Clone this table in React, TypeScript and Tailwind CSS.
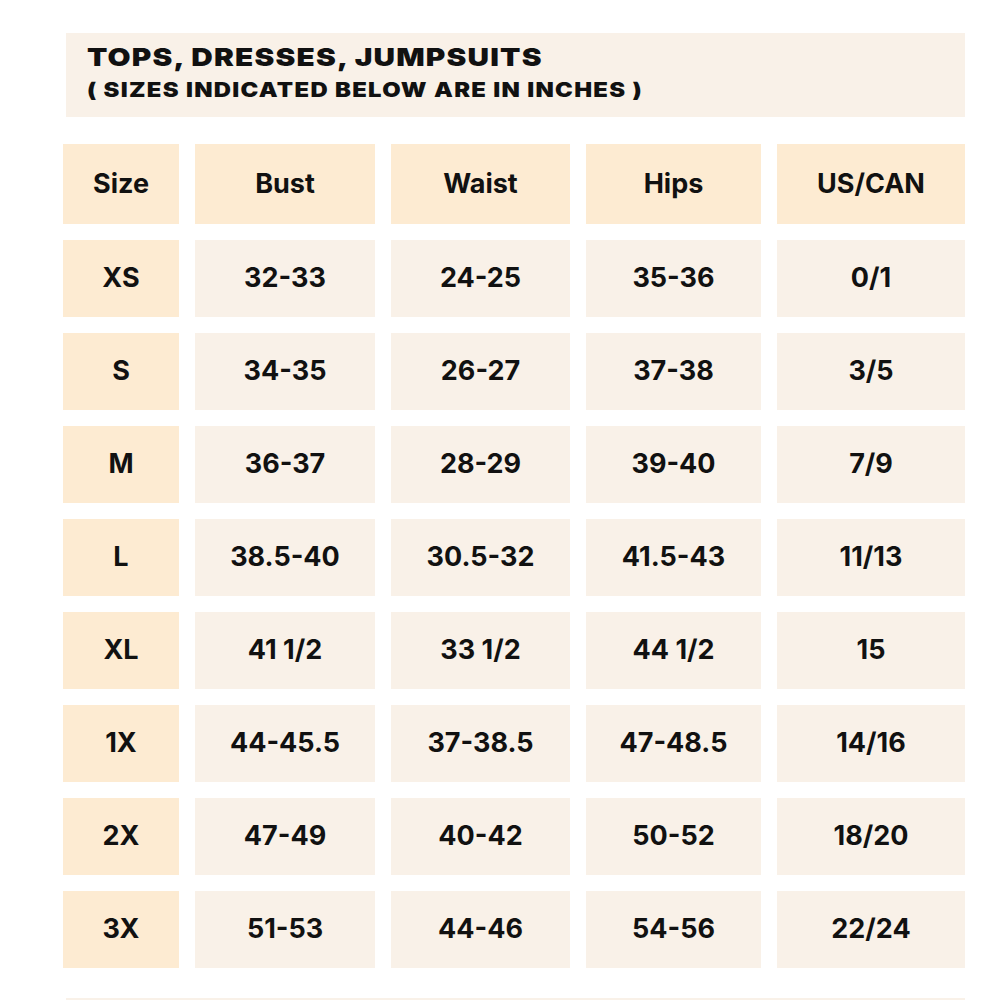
import React from 'react';

const headers = ['Size', 'Bust', 'Waist', 'Hips', 'US/CAN'];

const rows: string[][] = [
  ['XS', '32-33', '24-25', '35-36', '0/1'],
  ['S', '34-35', '26-27', '37-38', '3/5'],
  ['M', '36-37', '28-29', '39-40', '7/9'],
  ['L', '38.5-40', '30.5-32', '41.5-43', '11/13'],
  ['XL', '41 1/2', '33 1/2', '44 1/2', '15'],
  ['1X', '44-45.5', '37-38.5', '47-48.5', '14/16'],
  ['2X', '47-49', '40-42', '50-52', '18/20'],
  ['3X', '51-53', '44-46', '54-56', '22/24'],
];

const App: React.FC = () => {
  return (
    <div className="w-[1000px] h-[1000px] overflow-hidden bg-white text-[#111111]">
      {/* Title banner */}
      <div className="ml-[66px] mt-[33px] w-[899px] h-[84px] bg-[#f9f1e8] pl-[21px] pt-[9px] font-['Inter',sans-serif] font-black">
        <div className="origin-left scale-x-[1.19] tracking-[1px]">
          <div className="text-[25px] leading-[30px]">TOPS, DRESSES, JUMPSUITS</div>
          <div className="mt-[4px] text-[20px] leading-[28px] tracking-[1.1px]">( SIZES INDICATED BELOW ARE IN INCHES )</div>
        </div>
      </div>

      {/* Size table */}
      <div className="ml-[63px] mt-[27px] grid grid-cols-[116px_180px_179px_175px_188px] gap-x-4 gap-y-4 font-['Inter',sans-serif] font-bold text-[27px]">
        {headers.map((h) => (
          <div key={h} className="h-[80px] bg-[#fdebd2] flex items-center justify-center">
            {h}
          </div>
        ))}
        {rows.map((row) =>
          row.map((cell, i) => (
            <div
              key={row[0] + i}
              className={`h-[77px] flex items-center justify-center ${i === 0 ? 'bg-[#fdebd2]' : 'bg-[#f9f1e8]'}`}
            >
              {cell}
            </div>
          ))
        )}
      </div>

      {/* Next section, cut off */}
      <div className="ml-[66px] mt-[30px] w-[899px] h-[60px] bg-[#f9f1e8]" />
    </div>
  );
};

export default App;
